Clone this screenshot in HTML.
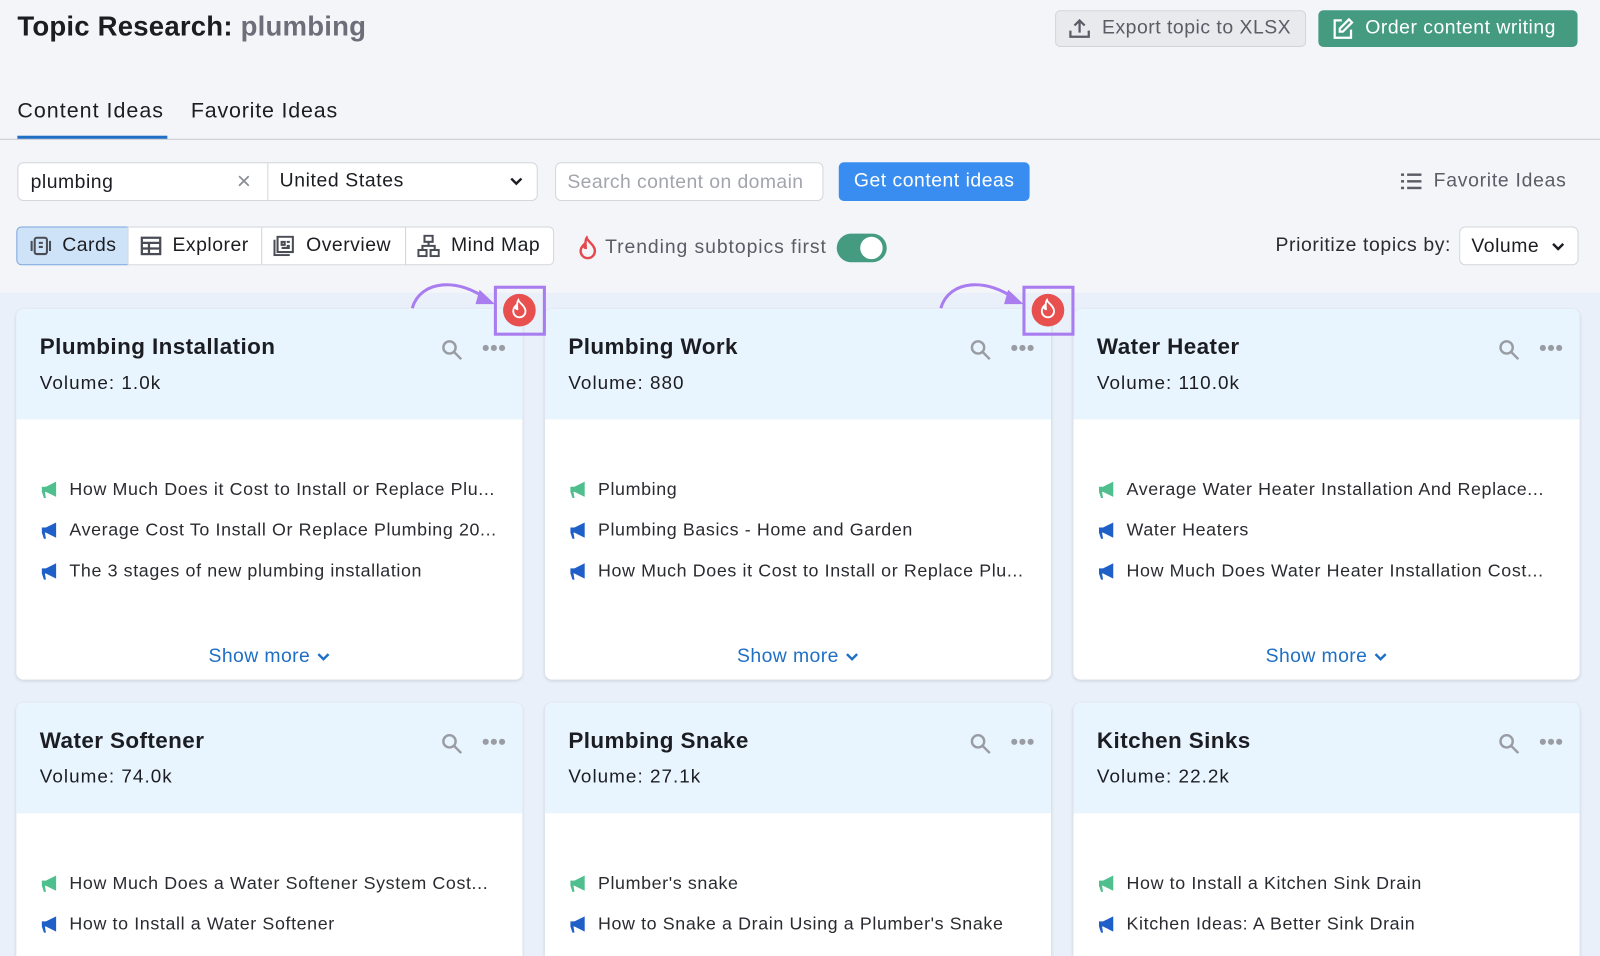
<!DOCTYPE html>
<html><head><meta charset="utf-8"><style>
*{box-sizing:border-box;margin:0;padding:0}
html,body{width:1600px;height:956px;overflow:hidden;background:#f4f5f9}
#w{position:absolute;left:0;top:0;width:1568px;height:937px;overflow:hidden;transform:scale(1.0204);transform-origin:0 0;font-family:"Liberation Sans",sans-serif;color:#1c1d22}
.a{position:absolute}
.btn{position:absolute;border-radius:5px;display:flex;align-items:center;font-size:19px;letter-spacing:.5px}
.box{position:absolute;background:#fff;border:1px solid #d4d6dc;border-radius:6px}
.card{position:absolute;width:496px;height:363px;background:#fff;border-radius:7px;box-shadow:0 1px 3px rgba(0,0,0,.12);overflow:hidden}
.card.b{height:248px;border-radius:7px 7px 0 0}
.card .hd{height:108px;background:#e9f5fe;padding:24px 23px}
.card h3{font-size:22px;font-weight:700;margin-bottom:11px;letter-spacing:.4px}
.card .v{font-size:18.5px;letter-spacing:1px}
.card .it{position:absolute;left:24px;font-size:17.5px;color:#2a2b30;display:flex;align-items:center;white-space:nowrap;letter-spacing:.6px}
.card .it svg{margin-right:9px}
.card .sm{position:absolute;left:0;right:0;top:330px;text-align:center;color:#1f6fc5;font-size:19px;letter-spacing:.4px}
.ic{position:absolute;top:29px}
.vt{position:absolute;top:222px;height:38px;display:flex;align-items:center;font-size:19px;letter-spacing:.5px;border:1px solid #d4d6dc;background:#fff;padding-left:11px}
</style></head><body><div id="w">
<div class="a" style="left:17px;top:11px;font-size:27px;font-weight:700;letter-spacing:.2px">Topic Research: <span style="color:#6c6e79">plumbing</span></div>
<div class="btn" style="left:1034px;top:10px;width:246px;height:36px;background:#e9eaee;border:1px solid #d3d5da;color:#5a5c66;padding-left:12px">
<svg width="22" height="22" viewBox="0 0 22 22" fill="none" stroke="#5a5c66" stroke-width="2.2"><path d="M11 15V3M6 8l5-5 5 5M2 13v6h18v-6"/></svg><span style="margin-left:11px">Export topic to XLSX</span></div>
<div class="btn" style="left:1292px;top:10px;width:254px;height:36px;background:#449b7f;color:#fff;padding-left:12px">
<svg width="24" height="24" viewBox="0 0 24 24" fill="none" stroke="#fff" stroke-width="2.2"><path d="M11 4H4v17h16v-8M18 3l3 3-9 9H9v-3z"/></svg><span style="margin-left:10px">Order content writing</span></div>
<div class="a" style="left:17px;top:97px;font-size:21px;letter-spacing:1px">Content Ideas</div>
<div class="a" style="left:187px;top:97px;font-size:21px;letter-spacing:.8px">Favorite Ideas</div>
<div class="a" style="left:0;top:136px;width:1568px;height:1px;background:#c8cad0"></div>
<div class="a" style="left:17px;top:133px;width:147px;height:3px;background:#1f6fc5"></div>
<div class="box" style="left:17px;top:159px;width:510px;height:38px"></div>
<div class="a" style="left:262px;top:159px;width:1px;height:38px;background:#d4d6dc"></div>
<div class="a" style="left:30px;top:168px;font-size:19px;letter-spacing:.5px">plumbing</div>
<div class="a" style="left:232px;top:164px;font-size:24px;color:#8a8c94">×</div>
<div class="a" style="left:274px;top:167px;font-size:19px;letter-spacing:.6px">United States</div>
<svg class="a" style="left:498px;top:172px" width="16" height="12" viewBox="0 0 16 12"><path d="M3 3l5 5 5-5" stroke="#1c1d22" stroke-width="2.4" fill="none"/></svg>
<div class="box" style="left:544px;top:159px;width:263px;height:38px"></div>
<div class="a" style="left:556px;top:168px;font-size:19px;color:#a3a5ad;letter-spacing:.4px">Search content on domain</div>
<div class="btn" style="left:822px;top:159px;width:187px;height:38px;background:#3a8df0;color:#fff;justify-content:center">Get content ideas</div>
<svg class="a" style="left:1372px;top:168px" width="22" height="20" viewBox="0 0 22 20" fill="#5a5c66"><rect x="1" y="2" width="3" height="2.4"/><rect x="1" y="8.5" width="3" height="2.4"/><rect x="1" y="15" width="3" height="2.4"/><rect x="7" y="2" width="14" height="2.4"/><rect x="7" y="8.5" width="14" height="2.4"/><rect x="7" y="15" width="14" height="2.4"/></svg>
<div class="a" style="left:1405px;top:167px;font-size:19px;color:#5a5c66;letter-spacing:.7px">Favorite Ideas</div>
<div class="vt" style="left:16px;width:110px;background:#cfe3f8;border-color:#7aa6de;border-radius:5px 0 0 5px"><svg width="24" height="20" viewBox="0 0 24 20" fill="none" stroke="#4a4c55" stroke-width="2"><rect x="6" y="2" width="12" height="16" rx="2"/><path d="M3 5v10M21 5v10M10 7h4M10 11h4"/></svg><span style="margin-left:9px">Cards</span></div>
<div class="vt" style="left:125px;width:132px"><svg width="22" height="20" viewBox="0 0 22 20" fill="none" stroke="#4a4c55" stroke-width="2.2"><rect x="2" y="2" width="18" height="16"/><path d="M2 7h18M2 12.5h18M9 7v11"/></svg><span style="margin-left:10px">Explorer</span></div>
<div class="vt" style="left:256px;width:142px"><svg width="22" height="20" viewBox="0 0 22 20" fill="none" stroke="#4a4c55" stroke-width="2"><rect x="4" y="1" width="15" height="15"/><path d="M1 4v15h15M8 6h3v3H8zM13 6h3M13 10h3M8 12h8"/></svg><span style="margin-left:10px">Overview</span></div>
<div class="vt" style="left:397px;width:146px;border-radius:0 5px 5px 0"><svg width="22" height="22" viewBox="0 0 22 22" fill="none" stroke="#4a4c55" stroke-width="2"><rect x="7" y="1" width="8" height="6"/><rect x="1" y="15" width="8" height="6"/><rect x="13" y="15" width="8" height="6"/><path d="M11 7v4M5 15v-4h12v4"/></svg><span style="margin-left:11px">Mind Map</span></div>
<svg class="a" style="left:566px;top:231px" width="20" height="24" viewBox="0 0 20 24"><path d="M9 2c1 4 8 7 8 13a7 7 0 0 1-14 0c0-3 2-5 3-6 0 2 1 3 2 3 0-4-1-7 1-10z" fill="none" stroke="#e5484d" stroke-width="2.4"/></svg>
<div class="a" style="left:593px;top:232px;font-size:19px;color:#5a5c66;letter-spacing:.9px">Trending subtopics first</div>
<div class="a" style="left:820px;top:229px;width:49px;height:28px;border-radius:14px;background:#449b7f"><div class="a" style="left:23px;top:3px;width:22px;height:22px;border-radius:50%;background:#fff"></div></div>
<div class="a" style="left:1250px;top:230px;font-size:19px;color:#2a2b30;letter-spacing:.6px">Prioritize topics by:</div>
<div class="box" style="left:1430px;top:222px;width:117px;height:38px"></div>
<div class="a" style="left:1442px;top:231px;font-size:19px;letter-spacing:.5px">Volume</div>
<svg class="a" style="left:1519px;top:236px" width="16" height="12" viewBox="0 0 16 12"><path d="M3 3l5 5 5-5" stroke="#1c1d22" stroke-width="2.4" fill="none"/></svg>
<div class="a" style="left:0;top:287px;width:1568px;height:650px;background:#e9f0f9"></div>

<div class="card" style="left:16px;top:303px"><div class="hd"><h3>Plumbing Installation</h3><div class="v">Volume: 1.0k</div></div></div>
<div class="card" style="left:534px;top:303px"><div class="hd"><h3>Plumbing Work</h3><div class="v">Volume: 880</div></div></div>
<div class="card" style="left:1052px;top:303px"><div class="hd"><h3>Water Heater</h3><div class="v">Volume: 110.0k</div></div></div>
<div class="card b" style="left:16px;top:689px"><div class="hd"><h3>Water Softener</h3><div class="v">Volume: 74.0k</div></div></div>
<div class="card b" style="left:534px;top:689px"><div class="hd"><h3>Plumbing Snake</h3><div class="v">Volume: 27.1k</div></div></div>
<div class="card b" style="left:1052px;top:689px"><div class="hd"><h3>Kitchen Sinks</h3><div class="v">Volume: 22.2k</div></div></div>
<script>
var G='<svg width="19" height="20" viewBox="0 0 19 20"><path d="M1 7h4l10-5v15L5 12H4l1 6H3L1 12z" fill="#4fbf8e"/></svg>';
var B=G.replace('#4fbf8e','#1f5fc8');
var data=[[16,303,[[G,'How Much Does it Cost to Install or Replace Plu...'],[B,'Average Cost To Install Or Replace Plumbing 20...'],[B,'The 3 stages of new plumbing installation']]],
[534,303,[[G,'Plumbing'],[B,'Plumbing Basics - Home and Garden'],[B,'How Much Does it Cost to Install or Replace Plu...']]],
[1052,303,[[G,'Average Water Heater Installation And Replace...'],[B,'Water Heaters'],[B,'How Much Does Water Heater Installation Cost...']]],
[16,689,[[G,'How Much Does a Water Softener System Cost...'],[B,'How to Install a Water Softener']]],
[534,689,[[G,"Plumber's snake"],[B,"How to Snake a Drain Using a Plumber's Snake"]]],
[1052,689,[[G,'How to Install a Kitchen Sink Drain'],[B,'Kitchen Ideas: A Better Sink Drain']]]];
var cs=document.querySelectorAll('.card');
data.forEach(function(d,i){var c=cs[i],h='';
d[2].forEach(function(it,j){h+='<div class="it" style="top:'+(166+40*j)+'px">'+it[0]+it[1]+'</div>';});
h+='<svg class="ic" style="left:416px" width="22" height="22" viewBox="0 0 22 22" fill="none" stroke="#9a9ca4" stroke-width="2.4"><circle cx="8.5" cy="8.5" r="6"/><path d="M13 13l7 7"/></svg>';
h+='<svg class="ic" style="left:456px;top:34px" width="24" height="8" viewBox="0 0 24 8" fill="#9a9ca4"><circle cx="4" cy="4" r="3"/><circle cx="12" cy="4" r="3"/><circle cx="20" cy="4" r="3"/></svg>';
if(i<3)h+='<div class="sm">Show more <svg width="14" height="10" viewBox="0 0 14 10"><path d="M2 2l5 5 5-5" stroke="#1f6fc5" stroke-width="2.4" fill="none"/></svg></div>';
c.insertAdjacentHTML('beforeend',h);});
</script>
<svg class="a" style="left:0;top:0" width="1568" height="340">
<g fill="none" stroke="#a97cf0" stroke-width="3">
<rect x="485.5" y="281.5" width="48" height="46"/><rect x="1003.5" y="281.5" width="48" height="46"/>
<path d="M404 302c8-28 46-30 74-8"/><path d="M922 302c8-28 46-30 74-8"/></g>
<g fill="#a97cf0"><path d="M470 284l15 14-19 0z"/><path d="M988 284l15 14-19 0z"/></g>
<g><circle cx="509" cy="304" r="16" fill="#e8504f"/><circle cx="1027" cy="304" r="16" fill="#e8504f"/>
<path d="M508 294c1 3 7 6 7 11a6 6 0 0 1-12 0c0-2 1-4 2-5 0 2 1 3 2 3 0-3-1-6 1-9z" fill="none" stroke="#fff" stroke-width="1.8"/>
<path d="M1026 294c1 3 7 6 7 11a6 6 0 0 1-12 0c0-2 1-4 2-5 0 2 1 3 2 3 0-3-1-6 1-9z" fill="none" stroke="#fff" stroke-width="1.8"/></g>
</svg>
</div></body></html>
